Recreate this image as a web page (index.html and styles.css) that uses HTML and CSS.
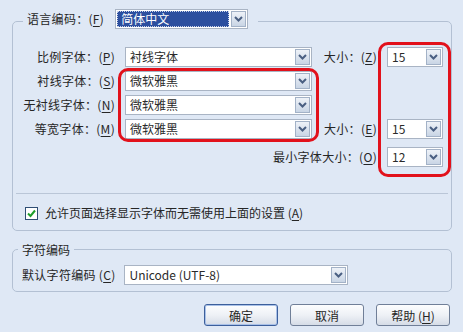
FILE: index.html
```html
<!DOCTYPE html>
<html lang="zh-CN">
<head>
    <meta charset="UTF-8">
    <title>字体设置</title>
    <link rel="stylesheet" href="styles.css">
</head>
<body>
    <div class="dialog">
        <fieldset class="group fonts">
            <legend class="lang">
                <span class="lbl">语言编码：(<u>F</u>)</span>
                <div class="select lang-select">
                    <span class="value selected">简体中文</span>
                    <span class="arrow"><svg width="9" height="6" viewBox="0 0 9 6"><path d="M1 1 L4.5 4.5 L8 1" fill="none" stroke="#4a5f82" stroke-width="2"/></svg></span>
                </div>
            </legend>

            <div class="font-grid">
                <span class="lbl main">比例字体：(<u>P</u>)</span>
                <div class="select"><span class="value">衬线字体</span><span class="arrow"><svg width="9" height="6" viewBox="0 0 9 6"><path d="M1 1 L4.5 4.5 L8 1" fill="none" stroke="#4a5f82" stroke-width="2"/></svg></span></div>
                <span class="lbl">大小：(<u>Z</u>)</span>
                <div class="select"><span class="value">15</span><span class="arrow"><svg width="9" height="6" viewBox="0 0 9 6"><path d="M1 1 L4.5 4.5 L8 1" fill="none" stroke="#4a5f82" stroke-width="2"/></svg></span></div>

                <span class="lbl main">衬线字体：(<u>S</u>)</span>
                <div class="select"><span class="value">微软雅黑</span><span class="arrow"><svg width="9" height="6" viewBox="0 0 9 6"><path d="M1 1 L4.5 4.5 L8 1" fill="none" stroke="#4a5f82" stroke-width="2"/></svg></span></div>

                <span class="lbl main">无衬线字体：(<u>N</u>)</span>
                <div class="select"><span class="value">微软雅黑</span><span class="arrow"><svg width="9" height="6" viewBox="0 0 9 6"><path d="M1 1 L4.5 4.5 L8 1" fill="none" stroke="#4a5f82" stroke-width="2"/></svg></span></div>

                <span class="lbl main">等宽字体：(<u>M</u>)</span>
                <div class="select"><span class="value">微软雅黑</span><span class="arrow"><svg width="9" height="6" viewBox="0 0 9 6"><path d="M1 1 L4.5 4.5 L8 1" fill="none" stroke="#4a5f82" stroke-width="2"/></svg></span></div>
                <span class="lbl">大小：(<u>E</u>)</span>
                <div class="select"><span class="value">15</span><span class="arrow"><svg width="9" height="6" viewBox="0 0 9 6"><path d="M1 1 L4.5 4.5 L8 1" fill="none" stroke="#4a5f82" stroke-width="2"/></svg></span></div>

                <span class="lbl min-label">最小字体大小：(<u>O</u>)</span>
                <div class="select min-select"><span class="value">12</span><span class="arrow"><svg width="9" height="6" viewBox="0 0 9 6"><path d="M1 1 L4.5 4.5 L8 1" fill="none" stroke="#4a5f82" stroke-width="2"/></svg></span></div>
            </div>

            <div class="sep"></div>

            <label class="check">
                <span class="box"><svg width="11" height="11" viewBox="0 0 11 11"><path d="M2 5.5 L4.5 8 L9 2.5" fill="none" stroke="#1f9e2a" stroke-width="2"/></svg></span>
                <span class="check-text">允许页面选择显示字体而无需使用上面的设置 (<u>A</u>)</span>
            </label>
        </fieldset>

        <fieldset class="group charset">
            <legend class="plain">字符编码</legend>
            <div class="charset-row">
                <span class="lbl">默认字符编码 (<u>C</u>)</span>
                <div class="select wide"><span class="value">Unicode (UTF-8)</span><span class="arrow"><svg width="9" height="6" viewBox="0 0 9 6"><path d="M1 1 L4.5 4.5 L8 1" fill="none" stroke="#4a5f82" stroke-width="2"/></svg></span></div>
            </div>
        </fieldset>

        <div class="buttons">
            <button class="btn default">确定</button>
            <button class="btn">取消</button>
            <button class="btn">帮助 (<u>H</u>)</button>
        </div>

        <!-- red annotation frames -->
        <div class="mark mark-fonts"></div>
        <div class="mark mark-sizes"></div>
    </div>
</body>
</html>
```

FILE: styles.css
```css
body {
    margin: 0;
    background-color: #dfe8f5;
    color: #262626;
    font-family: "Noto Sans CJK SC", "Noto Sans", sans-serif;
    font-size: 12px;
}

.dialog {
    position: relative;
    width: 463px;
    height: 332px;
    padding: 9px 11px 0 12px;
    box-sizing: border-box;
}

u {
    text-decoration: underline;
    text-underline-offset: 2px;
}

.group {
    margin: 0;
    padding: 0;
    border: 1px solid #b3c0d3;
    border-radius: 5px;
    min-width: 0;
}

.fonts {
    padding-bottom: 9px;
}

.lang {
    display: flex;
    align-items: center;
    gap: 11px;
    margin-left: 10px;
    padding: 0 10px 4px 4px;
}

.lbl {
    white-space: nowrap;
    line-height: 20px;
    letter-spacing: 0.3px;
}

/* dropdown */
.select {
    display: flex;
    height: 20px;
    box-sizing: border-box;
    border: 1px solid #a9b4c4;
    background-color: #fff;
}

.select .value {
    flex: 1;
    padding-left: 4px;
    line-height: 18px;
    white-space: nowrap;
    overflow: hidden;
    color: #2a2a2a;
}

.select .arrow {
    width: 15px;
    height: 16px;
    margin: 1px;
    box-sizing: border-box;
    border: 1px solid #a3b2c7;
    background: linear-gradient(#eef2f8, #c9d5e5);
    display: flex;
    align-items: center;
    justify-content: center;
}

.lang-select {
    width: 133px;
}

.lang-select .value.selected {
    margin: 1px;
    padding-left: 3px;
    line-height: 14px;
    background-color: #2c4f9f;
    color: #fff;
    border: 1px dotted #c9d3ea;
}

.font-grid {
    display: grid;
    grid-template-columns: 102px 187px 55px 56px;
    grid-template-rows: 20px 20px 20px 20px 24px;
    column-gap: 10px;
    row-gap: 4px;
    margin-top: 14px;
}

.font-grid .lbl {
    text-align: right;
}

.font-grid .main {
    grid-column: 1;
}

.font-grid .min-label {
    grid-column: 1 / 4;
    align-self: end;
}

.font-grid .min-select {
    align-self: end;
}

.sep {
    margin: 26px 3px 0 3px;
    border-top: 1px solid #bac6d7;
}

.check {
    display: flex;
    align-items: center;
    gap: 7px;
    margin: 11px 0 0 12px;
    line-height: 16px;
}

.check .box {
    width: 13px;
    height: 13px;
    box-sizing: border-box;
    border: 1px solid #2f4e74;
    background-color: #fff;
    display: flex;
    align-items: center;
    justify-content: center;
}

.charset {
    margin-top: 10px;
    padding-bottom: 6px;
}

.plain {
    margin-left: 5px;
    padding: 0 4px;
    line-height: 17px;
}

.charset-row {
    display: flex;
    align-items: center;
    gap: 9px;
    margin: 7px 0 0 9px;
}

.select.wide {
    width: 224px;
}

.buttons {
    display: flex;
    justify-content: flex-end;
    gap: 12px;
    margin-top: 12px;
    padding-right: 2px;
}

.btn {
    width: 74px;
    height: 22px;
    padding: 0;
    font-family: inherit;
    font-size: 12px;
    color: #262626;
    border: 1px solid #707f98;
    border-radius: 3px;
    background: linear-gradient(#fdfdfe, #eef1f6 50%, #d5dce7);
}

.btn.default {
    border-color: #3c5f9c;
    box-shadow: inset 0 0 0 1px #a9c1e8;
}

.mark {
    position: absolute;
    border: 3px solid #e2111b;
    border-radius: 10px;
    box-sizing: border-box;
}

.mark-fonts {
    left: 118px;
    top: 68px;
    width: 201px;
    height: 74px;
}

.mark-sizes {
    left: 378px;
    top: 42px;
    width: 73px;
    height: 135px;
}
```
